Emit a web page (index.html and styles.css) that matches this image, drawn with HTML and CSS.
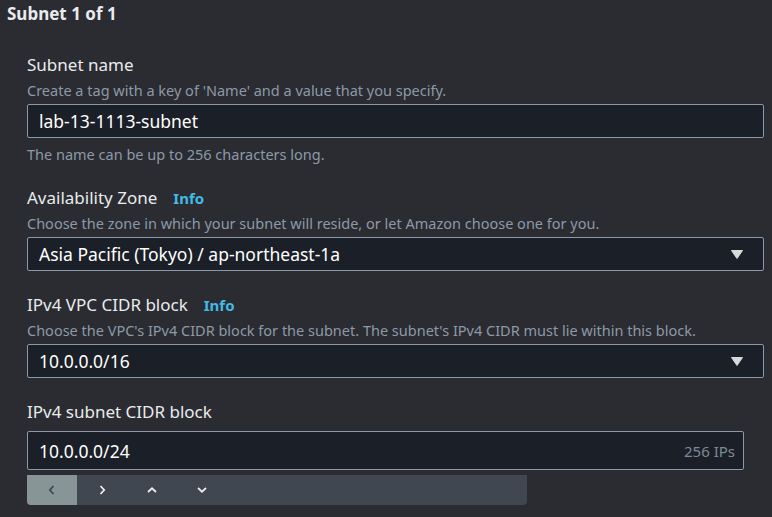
FILE: index.html
```html
<!DOCTYPE html>
<html lang="en">
<head>
<meta charset="utf-8">
<title>Subnet settings</title>
<link rel="stylesheet" href="styles.css">
</head>
<body>
<div class="page">
  <h2 class="header">Subnet 1 of 1</h2>
  <div class="form">
    <div class="field first">
      <div class="label">Subnet name</div>
      <div class="desc">Create a tag with a key of 'Name' and a value that you specify.</div>
      <div class="input"><span class="value">lab-13-1113-subnet</span></div>
      <div class="hint">The name can be up to 256 characters long.</div>
    </div>
    <div class="field">
      <div class="label">Availability Zone <a class="info">Info</a></div>
      <div class="desc">Choose the zone in which your subnet will reside, or let Amazon choose one for you.</div>
      <div class="input select"><span class="value">Asia Pacific (Tokyo) / ap-northeast-1a</span><svg class="caret" width="12" height="9" viewBox="0 0 12 9"><path d="M0.5 0.5 H11.5 L6 8.5 Z" fill="#d5dbdb" stroke="#d5dbdb" stroke-linejoin="round"/></svg></div>
    </div>
    <div class="field">
      <div class="label">IPv4 VPC CIDR block <a class="info">Info</a></div>
      <div class="desc">Choose the VPC's IPv4 CIDR block for the subnet. The subnet's IPv4 CIDR must lie within this block.</div>
      <div class="input select"><span class="value">10.0.0.0/16</span><svg class="caret" width="12" height="9" viewBox="0 0 12 9"><path d="M0.5 0.5 H11.5 L6 8.5 Z" fill="#d5dbdb" stroke="#d5dbdb" stroke-linejoin="round"/></svg></div>
    </div>
    <div class="field last">
      <div class="label">IPv4 subnet CIDR block</div>
      <div class="input cidr"><span class="value">10.0.0.0/24</span><span class="suffix">256 IPs</span></div>
      <div class="stepper">
        <button class="step active"><svg width="10" height="12" viewBox="0 0 10 12"><path d="M6.5 2 L2.8 6 L6.5 10" fill="none" stroke="#414750" stroke-width="1.8"/></svg></button>
        <button class="step"><svg width="10" height="12" viewBox="0 0 10 12"><path d="M3.5 2 L7.2 6 L3.5 10" fill="none" stroke="#e9ebed" stroke-width="1.8"/></svg></button>
        <button class="step"><svg width="12" height="10" viewBox="0 0 12 10"><path d="M2 7 L6 3.3 L10 7" fill="none" stroke="#e9ebed" stroke-width="1.8"/></svg></button>
        <button class="step"><svg width="12" height="10" viewBox="0 0 12 10"><path d="M2 3 L6 6.7 L10 3" fill="none" stroke="#e9ebed" stroke-width="1.8"/></svg></button>
      </div>
    </div>
  </div>
</div>
</body>
</html>
```

FILE: styles.css
```css
html, body {
  margin: 0;
  padding: 0;
  background: #2a2c31;
}
body {
  font-family: "Noto Sans", "Open Sans", Arial, sans-serif;
  color: #e9ebed;
  width: 772px;
  height: 517px;
  overflow: hidden;
}
.page {
  display: flex;
  flex-direction: column;
}
.header {
  margin: 0;
  padding: 4px 0 0 7px;
  font-size: 17px;
  line-height: 20px;
  font-weight: 700;
  color: #e9ebed;
}
.form {
  display: flex;
  flex-direction: column;
  padding: 30px 8px 0 27px;
}
.field {
  display: flex;
  flex-direction: column;
  margin-top: 23px;
}
.field.first {
  margin-top: 0;
}
.label {
  font-size: 17px;
  line-height: 22px;
  color: #e9ebed;
  display: flex;
  align-items: baseline;
}
.info {
  font-size: 15px;
  font-weight: 700;
  color: #44b9e6;
  margin-left: 16px;
}
.desc {
  font-size: 14.5px;
  line-height: 18px;
  color: #8d99a8;
  margin-top: 5px;
}
.hint {
  font-size: 14.5px;
  line-height: 20px;
  color: #8d99a8;
  margin-top: 6px;
}
.input {
  box-sizing: border-box;
  height: 34px;
  margin-top: 5px;
  background: #1b1f27;
  border: 1px solid #8d99a8;
  border-radius: 2px;
  display: flex;
  align-items: center;
  padding: 0 11px 0 11px;
}
.value {
  font-size: 17.5px;
  color: #ffffff;
  flex: 1;
}
.select .caret {
  margin-right: 9px;
}
.field.last .label {
  margin-bottom: 3px;
}
.cidr {
  height: 39px;
  width: 717px;
}
.suffix {
  font-size: 15px;
  color: #7d8998;
  margin-right: -3px;
}
.stepper {
  display: flex;
  width: 500px;
  height: 30px;
  margin-top: 5px;
  background: #414750;
  border-radius: 0 0 4px 4px;
  overflow: hidden;
}
.step {
  width: 50px;
  height: 30px;
  border: 0;
  padding: 0;
  margin: 0;
  background: transparent;
  display: flex;
  align-items: center;
  justify-content: center;
}
.step.active {
  background: #879596;
}
```
